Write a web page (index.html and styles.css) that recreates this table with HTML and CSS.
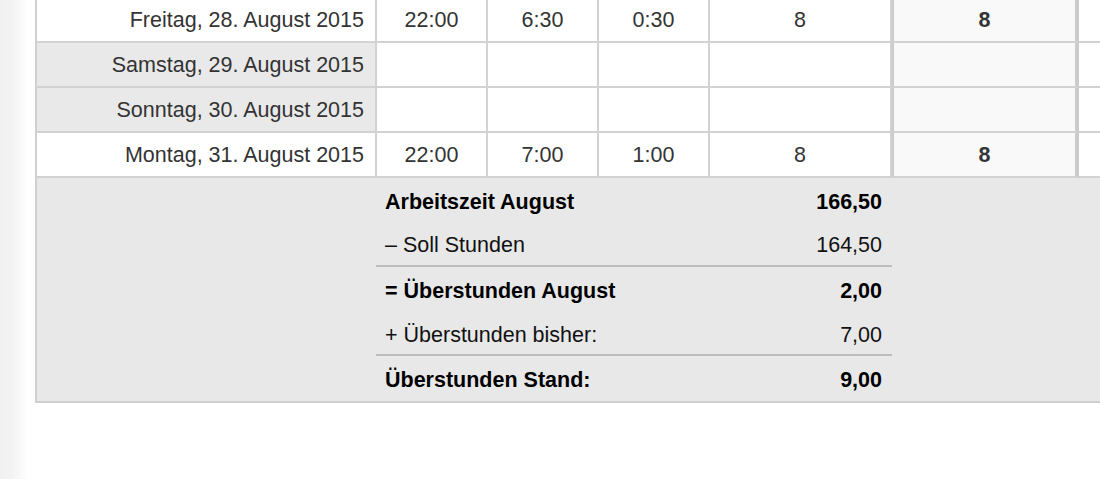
FILE: index.html
```html
<!DOCTYPE html>
<html lang="de">
  <head>
    <meta charset="UTF-8" />
    <meta name="viewport" content="width=device-width, initial-scale=1.0" />
    <title>Arbeitszeit August 2015</title>
    <link rel="stylesheet" href="styles.css">
  </head>
  <body>
    <div class="sheet">

      <!-- Tage -->
      <div class="day">
        <div class="cell date">Freitag, 28. August 2015</div>
        <div class="cell">22:00</div>
        <div class="cell">6:30</div>
        <div class="cell">0:30</div>
        <div class="cell">8</div>
        <div class="cell total">8</div>
        <div class="cell rest"></div>
      </div>
      <div class="day weekend">
        <div class="cell date">Samstag, 29. August 2015</div>
        <div class="cell"></div>
        <div class="cell"></div>
        <div class="cell"></div>
        <div class="cell"></div>
        <div class="cell total"></div>
        <div class="cell rest"></div>
      </div>
      <div class="day weekend">
        <div class="cell date">Sonntag, 30. August 2015</div>
        <div class="cell"></div>
        <div class="cell"></div>
        <div class="cell"></div>
        <div class="cell"></div>
        <div class="cell total"></div>
        <div class="cell rest"></div>
      </div>
      <div class="day">
        <div class="cell date">Montag, 31. August 2015</div>
        <div class="cell">22:00</div>
        <div class="cell">7:00</div>
        <div class="cell">1:00</div>
        <div class="cell">8</div>
        <div class="cell total">8</div>
        <div class="cell rest"></div>
      </div>

      <!-- Monatsabschluss -->
      <div class="summary">
        <div class="balance">
          <div class="line strong"><span>Arbeitszeit August</span><span>166,50</span></div>
          <div class="line ruled"><span>– Soll Stunden</span><span>164,50</span></div>
          <div class="line strong"><span>= Überstunden August</span><span>2,00</span></div>
          <div class="line ruled"><span>+ Überstunden bisher:</span><span>7,00</span></div>
          <div class="line strong"><span>Überstunden Stand:</span><span>9,00</span></div>
        </div>
      </div>

    </div>
  </body>
</html>
```

FILE: styles.css
```css
* {
  margin: 0;
  padding: 0;
  box-sizing: border-box;
}

body {
  font-family: "Liberation Sans", Arial, sans-serif;
  font-size: 21.5px;
  color: #333;
  width: 100vw;
  height: 100vh;
  overflow: hidden;
  background: linear-gradient(to right, #f1f1f1 0, #f3f3f3 12px, #fff 28px) no-repeat;
  background-size: 35px 100%;
  background-color: #fff;
}

.sheet {
  margin-left: 35px;
  margin-top: -2px;
  width: 1100px;
  border-left: 2px solid #d0d0d0;
}

.day {
  display: grid;
  grid-template-columns: 340px 111px 111px 111px 182px 187px 1fr;
  height: 45px;
}

.cell {
  display: flex;
  align-items: center;
  justify-content: center;
  padding-top: 1px;
  border-right: 2px solid #d2d2d2;
  border-bottom: 2px solid #d2d2d2;
  background: #fff;
}

.cell.date {
  justify-content: flex-end;
  padding-right: 11px;
}

.weekend .cell.date {
  background: #e9e9e9;
}

.cell.total {
  background: #f9f9f9;
  font-weight: bold;
  border-left: 2px solid #cbcbcb;
  border-right: 4px solid #cbcbcb;
}

.cell.rest {
  border-right: none;
}

.summary {
  background: #e8e8e8;
  border-bottom: 2px solid #d0d0d0;
  padding-left: 339px;
  height: 225px;
}

.balance {
  width: 516px;
  color: #111;
}

.line {
  display: flex;
  justify-content: space-between;
  align-items: center;
  height: 44.6px;
  padding: 4px 10px 0 9px;
}

.line.strong {
  font-weight: bold;
  color: #000;
}

.line.ruled {
  border-bottom: 2px solid #bdbdbd;
}
```
